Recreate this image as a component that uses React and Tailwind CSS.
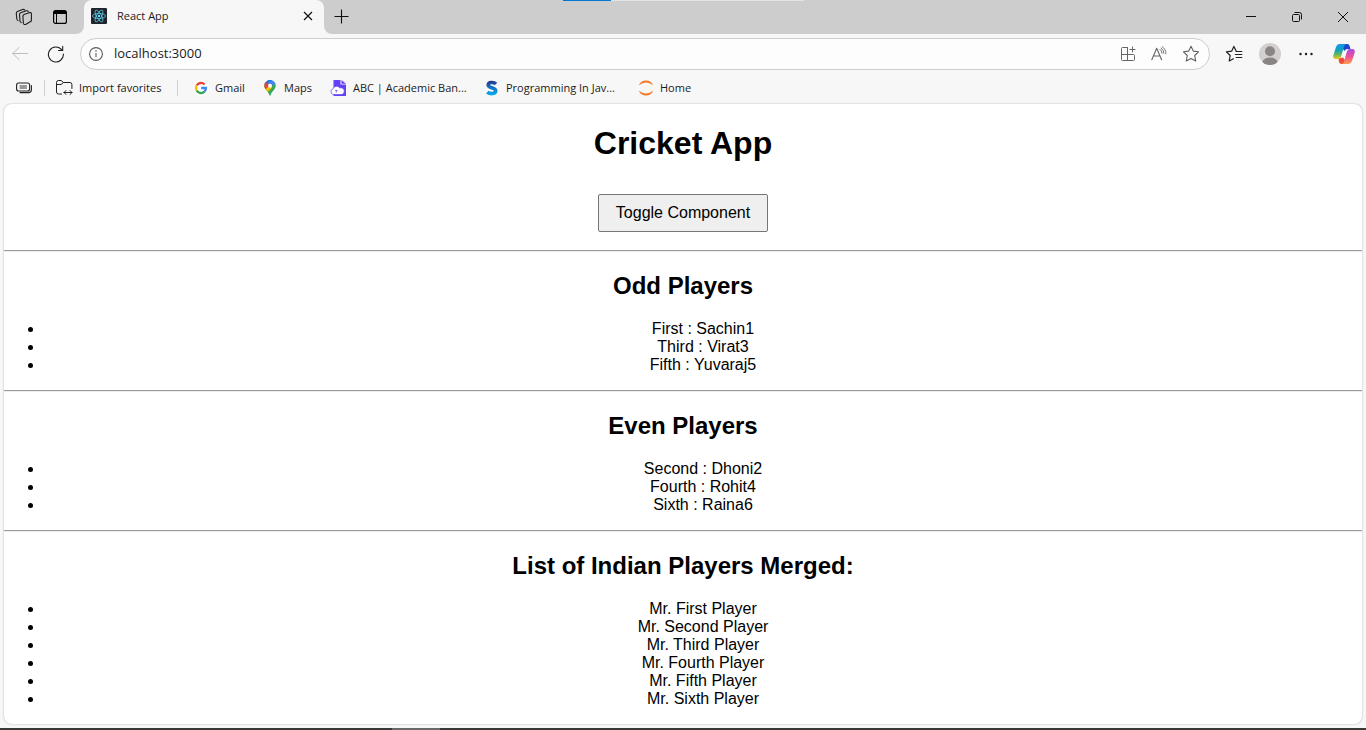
import React from "react";

function WorkspacesIcon() {
  return (
    <svg width="18" height="18" viewBox="0 0 18 18" fill="none" stroke="#1b1b1b" strokeWidth="1.1" strokeLinejoin="round" strokeLinecap="round">
      <path d="M9 6.5 14.8 4.6Q16.4 4.3 16.4 5.8V12.2Q16.4 13.2 15.6 13.6L10.6 16.4Q8.9 17 8.4 15.4L7.9 8.2Q7.9 7 9 6.5Z" />
      <path d="M6.2 14.6Q5.2 14.2 5 13L4.5 6.6Q4.5 5.3 5.6 4.8L11.3 2.8Q12.8 2.5 13.3 3.6" />
      <path d="M3 12.6Q2 12 1.8 11L1.3 5.4Q1.3 4.1 2.4 3.6L7.6 1.5Q8.9 1 9.8 2" />
    </svg>
  );
}

function TabActionsIcon() {
  return (
    <svg width="14" height="14" viewBox="0 0 14 14" fill="none">
      <rect x=".6" y=".6" width="12.8" height="12.8" rx="2" stroke="#000" strokeWidth="1.2" />
      <path d="M.6 2.6Q.6.6 2.6.6H11.4Q13.4.6 13.4 2.6V4H.6Z" fill="#000" />
      <path d="M3.5 4V13.4" stroke="#000" />
    </svg>
  );
}

function ReactLogo() {
  return (
    <svg width="16" height="16" viewBox="0 0 16 16">
      <rect width="16" height="16" rx="1" fill="#20232a" />
      <g fill="none" stroke="#61dafb" strokeWidth=".7">
        <ellipse cx="8" cy="8" rx="6.6" ry="2.5" />
        <ellipse cx="8" cy="8" rx="6.6" ry="2.5" transform="rotate(60 8 8)" />
        <ellipse cx="8" cy="8" rx="6.6" ry="2.5" transform="rotate(120 8 8)" />
      </g>
      <circle cx="8" cy="8" r="1.3" fill="#61dafb" />
    </svg>
  );
}

function BackIcon() {
  return (
    <svg width="16" height="14" viewBox="0 0 16 14" fill="none" stroke="#bdbdbd" strokeLinecap="round" strokeLinejoin="round">
      <path d="M15.5 6.5H.7M7 .5.7 6.5 7 12.5" />
    </svg>
  );
}

function RefreshIcon() {
  return (
    <svg width="18" height="18" viewBox="0 0 18 18" fill="none" stroke="#222" strokeWidth="1.1" strokeLinecap="round" strokeLinejoin="round">
      <path d="M16.4 9A7.5 7.5 0 1 1 14.8 4.8" />
      <path d="M15.7 1.3V5.5H11.5" />
    </svg>
  );
}

function InfoIcon() {
  return (
    <svg width="14" height="14" viewBox="0 0 14 14" fill="none" stroke="#5c5c5c">
      <circle cx="7" cy="7" r="6.4" strokeWidth="1.1" />
      <path d="M7 6V10.3" strokeWidth="1.1" />
      <circle cx="7" cy="4" r=".8" fill="#5c5c5c" stroke="none" />
    </svg>
  );
}

function AppsPlusIcon() {
  return (
    <svg width="16" height="16" viewBox="0 0 16 16" fill="none" stroke="#666" strokeLinejoin="round" strokeLinecap="round">
      <path d="M7.5 1.5H2.5Q1.5 1.5 1.5 2.5V13.5Q1.5 14.5 2.5 14.5H13.5Q14.5 14.5 14.5 13.5V9.5Q14.5 8.5 13.5 8.5H1.5M7.5 1.5V14.5" />
      <path d="M12.5 1V6M10 3.5H15" />
    </svg>
  );
}

function ReadAloudIcon() {
  return (
    <svg width="16" height="16" viewBox="0 0 16 16" fill="none" stroke="#666" strokeLinecap="round" strokeLinejoin="round" strokeWidth="1.1">
      <path d="M.8 13.8 5.7 2.3 10.6 13.8M2.4 10H9" />
      <path d="M9 3.3Q11 4.6 11 7.2M11.1.6Q15.2 3.1 14.9 7.8M10.1 2Q12.9 3.9 12.9 7.3" strokeWidth=".9" />
    </svg>
  );
}

function StarIcon() {
  return (
    <svg width="18" height="18" viewBox="0 0 18 18" fill="none" stroke="#606060" strokeWidth="1.1" strokeLinejoin="round">
      <path d="M9 1.3 11.3 6.1 16.5 6.8 12.7 10.5 13.7 16 9 13.4 4.3 16 5.3 10.5 1.5 6.8 6.7 6.1Z" />
    </svg>
  );
}

function FavoritesIcon() {
  return (
    <svg width="18" height="18" viewBox="0 0 18 18" fill="none" stroke="#1f1f1f" strokeWidth="1.2" strokeLinejoin="round" strokeLinecap="round">
      <path d="M11 5.7 8.9 1.4 6.6 6.2 1.4 6.9 5.2 10.5 4.2 16 8.4 13.8" />
      <path d="M11.2 6.5H16.8M10.3 9.5H16.8M11.2 12.5H16.8" />
    </svg>
  );
}

function ProfileIcon() {
  return (
    <svg width="22" height="22" viewBox="0 0 22 22">
      <defs>
        <clipPath id="avatar">
          <circle cx="11" cy="11" r="11" />
        </clipPath>
      </defs>
      <g clipPath="url(#avatar)">
        <rect width="22" height="22" fill="#d2d0ce" />
        <circle cx="11" cy="8.3" r="5" fill="#8a8583" />
        <ellipse cx="11" cy="19.6" rx="7.7" ry="5.1" fill="#8a8583" />
      </g>
    </svg>
  );
}

function CopilotLogo() {
  return (
    <svg width="22" height="22" viewBox="0 0 22 22">
      <defs>
        <linearGradient id="cpLeft" x1="0" y1="0" x2="0" y2="1">
          <stop offset="0" stopColor="#1697f0" />
          <stop offset=".4" stopColor="#0f9fc0" />
          <stop offset=".7" stopColor="#62b85e" />
          <stop offset="1" stopColor="#f5c518" />
        </linearGradient>
        <linearGradient id="cpRight" x1="0" y1="0" x2="0" y2="1">
          <stop offset="0" stopColor="#a94be8" />
          <stop offset=".5" stopColor="#ec5096" />
          <stop offset="1" stopColor="#ff9d52" />
        </linearGradient>
      </defs>
      <path d="M11 1H14.5Q16 1 16.6 3L17.5 6H14.2Q12.3 6 11.7 8L9 5Z" fill="#1c48c8" />
      <path d="M5.5 15.5 10 14.5 12 17 11 21H8.5Q6.5 21 6 19Z" fill="#f04c36" />
      <path d="M6.3 1H13Q11.5 1.5 10.8 4L8.1 13.6Q7.4 16 5 16H2.5Q-.5 16 .4 12.3L3 4Q4 1 6.3 1Z" fill="url(#cpLeft)" />
      <path d="M15.7 21H9Q10.5 20.5 11.2 18L13.9 8.4Q14.6 6 17 6H19.5Q22.5 6 21.6 9.7L19 18Q18 21 15.7 21Z" fill="url(#cpRight)" />
    </svg>
  );
}

function CollapsedBarIcon() {
  return (
    <svg width="16" height="12" viewBox="0 0 16 12" fill="none" stroke="#222" strokeLinecap="round" strokeWidth="1.1">
      <rect x=".6" y="1" width="13" height="8" rx="2" />
      <path d="M4 4H10.5M4 6H10.5" strokeWidth=".9" />
      <path d="M15.4 3.5V7.8Q15.4 10.6 12.5 10.6H4" />
    </svg>
  );
}

function ImportFolderIcon() {
  return (
    <svg width="17" height="16" viewBox="0 0 17 16" fill="none" stroke="#222" strokeLinecap="round" strokeLinejoin="round">
      <path d="M5.5 14H2.5Q.5 14 .5 12V2.5Q.5.5 2.5.5H5L7.5 2.5H14Q15.9 2.5 15.9 4.5V8.5M.5 4.5H5L7.5 2.5" />
      <path d="M8 12.5H16M10 10.5 8 12.5 10 14.5M14 10.5 16 12.5 14 14.5" />
    </svg>
  );
}

function GoogleLogo() {
  return (
    <svg width="16" height="16" viewBox="0 0 16 16">
      <circle cx="8" cy="8" r="8" fill="#fff" />
      <g fill="none" strokeWidth="2.3">
        <path d="M3.7 5.4A5 5 0 0 1 11.6 4.5" stroke="#ea4335" />
        <path d="M3.7 10.6A5 5 0 0 1 3.7 5.4" stroke="#fbbc05" />
        <path d="M11.5 11.6A5 5 0 0 1 3.7 10.6" stroke="#34a853" />
        <path d="M8.2 8H13A5 5 0 0 1 11.4 11.7" stroke="#4285f4" />
      </g>
    </svg>
  );
}

function MapsLogo() {
  return (
    <svg width="12" height="16" viewBox="0 0 12 16">
      <defs>
        <clipPath id="pin">
          <path d="M6 0A5.7 5.7 0 0 1 11.7 5.7C11.7 9.5 7.5 11.2 6.7 15Q6 16.4 5.3 15C4.5 11.2.3 9.5.3 5.7A5.7 5.7 0 0 1 6 0Z" />
        </clipPath>
      </defs>
      <g clipPath="url(#pin)">
        <rect width="12" height="16" fill="#34a853" />
        <path d="M0 0H12V4L6 6 0 4Z" fill="#4285f4" />
        <path d="M0 1 2 1.7 6 5 1.2 9.5 0 8Z" fill="#ea4335" />
        <path d="M6 5.5 8 7.5 3 13 1 9.5Z" fill="#fbbc04" />
        <path d="M4 0H8L2 4Z" fill="#1a73e8" />
      </g>
      <circle cx="6" cy="5.7" r="2" fill="#fff" />
    </svg>
  );
}

function AcademicBankLogo() {
  return (
    <svg width="17" height="16" viewBox="0 0 17 16">
      <path d="M3.5 0H10.5V4.5H16V16H3.5Z" fill="#6540f5" />
      <path d="M11.5 0 16 3.8H11.5Z" fill="#6540f5" />
      <path d="M3.5 14.6A3 3 0 0 1 3 8.8 3.8 3.8 0 0 1 9.8 8 3.4 3.4 0 1 1 11 14.6Z" fill="#fff" stroke="#6540f5" strokeWidth=".7" />
      <path d="M6.3 12.5V10M5.3 10.9 6.3 9.9 7.3 10.9" stroke="#6540f5" strokeWidth=".8" fill="none" />
    </svg>
  );
}

function ScalerLogo() {
  return (
    <svg width="12" height="16" viewBox="0 0 12 16" fill="none">
      <defs>
        <linearGradient id="sBlue" x1="0" y1="0" x2="0" y2="16" gradientUnits="userSpaceOnUse">
          <stop offset=".1" stopColor="#243d91" />
          <stop offset=".5" stopColor="#1675c4" />
          <stop offset="1" stopColor="#08b4f0" />
        </linearGradient>
      </defs>
      <path d="M10 3.9C8 1.9 2.2 1.7 2.2 4.9 2.2 8.2 9.7 7.2 9.7 10.8 9.7 14.4 3.4 14.1 1.3 12.1" stroke="url(#sBlue)" strokeWidth="3.6" />
    </svg>
  );
}

function JupyterLogo() {
  return (
    <svg width="16" height="16" viewBox="0 0 16 16" fill="#f37726">
      <path d="M.8 5.2A7.8 7.8 0 0 1 15.2 5.2Q8-.2.8 5.2Z" />
      <path d="M.8 10.8A7.8 7.8 0 0 0 15.2 10.8Q8 16.2.8 10.8Z" />
    </svg>
  );
}

function TabStrip() {
  return (
    <header className="relative flex h-[34px] bg-[#f7f7f7]">
      <div className="flex w-21 items-center gap-5 rounded-br-lg bg-[#cdcdcd] pl-[15px]">
        <button aria-label="Workspaces"><WorkspacesIcon /></button>
        <button aria-label="Tab actions menu"><TabActionsIcon /></button>
      </div>
      <div className="w-60 bg-[#cdcdcd]">
        <div className="flex h-full items-center rounded-t-lg bg-[#f7f7f7] pr-[11px] pb-0.5 pl-[7px]">
          <ReactLogo />
          <span className="ml-2.5 flex-1 text-[11px]">React App</span>
          <button aria-label="Close tab">
            <svg width="10" height="10" viewBox="0 0 10 10" stroke="#111" strokeWidth="1.2">
              <path d="M1 1 9 9M9 1 1 9" />
            </svg>
          </button>
        </div>
      </div>
      <div className="flex flex-1 items-center justify-between rounded-bl-lg bg-[#cdcdcd] pr-[18px] pl-2.5">
        <button aria-label="New tab" className="pb-0.5">
          <svg width="15" height="15" viewBox="0 0 15 15" stroke="#111" strokeWidth="1.1">
            <path d="M7.5.5V14.5M.5 7.5H14.5" />
          </svg>
        </button>
        <div className="flex items-center gap-9">
          <button aria-label="Minimize">
            <svg width="10" height="10" viewBox="0 0 10 10" stroke="#111"><path d="M0 4.5H10" /></svg>
          </button>
          <button aria-label="Restore">
            <svg width="10" height="10" viewBox="0 0 10 10" fill="none" stroke="#111">
              <rect x=".5" y="2.5" width="7" height="7" rx="1" />
              <path d="M2.5.5H7.5Q9.5.5 9.5 2.5V7.5" />
            </svg>
          </button>
          <button aria-label="Close window">
            <svg width="10" height="10" viewBox="0 0 10 10" stroke="#111"><path d="M0 0 10 10M10 0 0 10" /></svg>
          </button>
        </div>
      </div>
      <div className="absolute top-0 left-[563px] flex h-px w-[241px] bg-[#e4e4e4]">
        <div className="w-12 bg-[#0078d4]" />
      </div>
    </header>
  );
}

function Toolbar() {
  return (
    <div className="flex h-10 items-center pr-[11px] pl-3">
      <button aria-label="Back" disabled><BackIcon /></button>
      <button aria-label="Refresh" className="ml-[19px]"><RefreshIcon /></button>
      <div className="ml-[15px] flex h-8 flex-1 items-center rounded-full border border-[#cdcdcd] bg-[#fdfdfd] pr-[9px] pl-2">
        <button aria-label="View site information"><InfoIcon /></button>
        <input
          aria-label="Address"
          type="text"
          defaultValue="localhost:3000"
          className="ml-[11px] min-w-0 flex-1 bg-transparent text-[13px] outline-none"
        />
        <div className="flex items-center gap-[15px]">
          <button aria-label="App available"><AppsPlusIcon /></button>
          <button aria-label="Read aloud"><ReadAloudIcon /></button>
          <button aria-label="Add to favorites"><StarIcon /></button>
        </div>
      </div>
      <button aria-label="Favorites" className="ml-[15px]"><FavoritesIcon /></button>
      <button aria-label="Profile" className="ml-4"><ProfileIcon /></button>
      <button aria-label="Settings and more" className="ml-[18px]">
        <svg width="14" height="4" viewBox="0 0 14 4" fill="#1b1b1b">
          <circle cx="1.5" cy="2" r="1.2" />
          <circle cx="7" cy="2" r="1.2" />
          <circle cx="12.5" cy="2" r="1.2" />
        </svg>
      </button>
      <button aria-label="Copilot" className="ml-5"><CopilotLogo /></button>
    </div>
  );
}

const bookmarks = [
  { label: "Gmail", Logo: GoogleLogo, layout: "w-[71px] gap-1.5" },
  { label: "Maps", Logo: MapsLogo, layout: "w-[66px] gap-2" },
  { label: "ABC | Academic Ban...", Logo: AcademicBankLogo, layout: "w-[156px] gap-1.5" },
  { label: "Programming In Jav...", Logo: ScalerLogo, layout: "w-[152px] gap-2" },
  { label: "Home", Logo: JupyterLogo, layout: "w-16 gap-1.5" },
];

function FavoritesBar() {
  return (
    <nav aria-label="Favorites bar" className="flex h-[30px] items-center pb-0.5 pl-4 text-[11px] whitespace-nowrap">
      <button aria-label="Collapse favorites"><CollapsedBarIcon /></button>
      <div className="ml-3 h-4 w-px bg-[#cfcfcf]" />
      <button className="ml-[11px] flex w-[121px] items-center gap-1.5">
        <ImportFolderIcon />
        Import favorites
      </button>
      <div className="mr-[15px] h-4 w-px bg-[#cfcfcf]" />
      {bookmarks.map(({ label, Logo, layout }) => (
        <a key={label} href="#" className={`flex shrink-0 items-center ${layout}`}>
          <Logo />
          {label}
        </a>
      ))}
    </nav>
  );
}

const sections = [
  { title: "Odd Players", items: ["First : Sachin1", "Third : Virat3", "Fifth : Yuvaraj5"] },
  { title: "Even Players", items: ["Second : Dhoni2", "Fourth : Rohit4", "Sixth : Raina6"] },
  {
    title: "List of Indian Players Merged:",
    items: [
      "Mr. First Player",
      "Mr. Second Player",
      "Mr. Third Player",
      "Mr. Fourth Player",
      "Mr. Fifth Player",
      "Mr. Sixth Player",
    ],
  },
];

function CricketPage() {
  return (
    <main className="mx-1 mb-1 flex-1 overflow-hidden rounded-lg bg-white pt-[21px] text-center font-['Liberation_Sans',Arial,sans-serif] text-base leading-[18px] text-black shadow-[0_0_2px_rgba(0,0,0,0.3)]">
      <h1 className="text-[32px] leading-9 font-bold">Cricket App</h1>
      <button className="mt-[33px] mb-[18px] h-[38px] rounded-xs border border-[#767676] bg-[#efefef] px-[17px]">
        Toggle Component
      </button>
      {sections.map(({ title, items }) => (
        <section key={title}>
          <hr className="h-0.5 border-t border-b border-t-[#9a9a9a] border-b-[#eeeeee]" />
          <h2 className="mt-5 text-2xl leading-7 font-bold">{title}</h2>
          <ul className="mt-5 mb-4 list-disc pl-10">
            {items.map((item) => (
              <li key={item}>{item}</li>
            ))}
          </ul>
        </section>
      ))}
    </main>
  );
}

export default function App() {
  return (
    <div className="flex min-h-screen flex-col bg-[#f7f7f7] font-['Open_Sans','Noto_Sans',sans-serif] text-[#1b1b1b]">
      <TabStrip />
      <Toolbar />
      <FavoritesBar />
      <CricketPage />
      <footer className="flex h-0.5 bg-[#3b3838]">
        <div className="ml-[392px] w-12 bg-[#6a6868]" />
      </footer>
    </div>
  );
}
